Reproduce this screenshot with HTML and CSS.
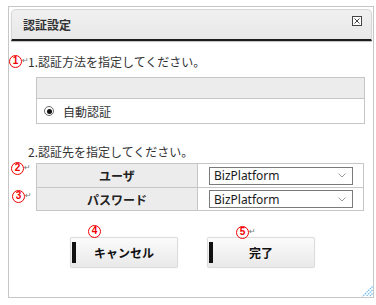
FILE: index.html
```html
<!DOCTYPE html>
<html lang="ja">
<head>
<meta charset="utf-8">
<title>認証設定</title>
<link rel="stylesheet" href="styles.css">
</head>
<body>
<div class="dialog">
  <div class="hdr">
    <span class="title">認証設定</span>
    <svg class="close" width="10" height="10" viewBox="0 0 10 10" aria-label="閉じる">
      <rect x="0.5" y="0.5" width="9" height="9" fill="#fff" stroke="#444"/>
      <path d="M2.5 2.5 L7.5 7.5 M7.5 2.5 L2.5 7.5" stroke="#444" stroke-width="1"/>
    </svg>
  </div>
  <div class="body">
    <p class="step step1">1.認証方法を指定してください。</p>
    <div class="box">
      <div class="box-head"></div>
      <div class="radio-row"><span class="radio"></span><span>自動認証</span></div>
    </div>
    <p class="step step2">2.認証先を指定してください。</p>
    <div class="grid">
      <div class="th">ユーザ</div>
      <div class="td"><div class="select"><span>BizPlatform</span><svg width="8" height="5" viewBox="0 0 8 5"><path d="M0.5 0.5 L4 4 L7.5 0.5" fill="none" stroke="#999" stroke-width="1"/></svg></div></div>
      <div class="th">パスワード</div>
      <div class="td"><div class="select"><span>BizPlatform</span><svg width="8" height="5" viewBox="0 0 8 5"><path d="M0.5 0.5 L4 4 L7.5 0.5" fill="none" stroke="#999" stroke-width="1"/></svg></div></div>
    </div>
    <div class="actions">
      <button class="btn" type="button">キャンセル</button>
      <button class="btn" type="button">完了</button>
    </div>
  </div>
  <span class="mk mk1"><b>1</b><i>↵</i></span>
  <span class="mk mk2"><b>2</b><i>↵</i></span>
  <span class="mk mk3"><b>3</b><i>↵</i></span>
  <span class="mk mk4"><b>4</b></span>
  <span class="mk mk5"><b>5</b><i>↵</i></span>
  <svg class="grip" width="11" height="11" viewBox="0 0 11 11">
    <path d="M10.5 0.5 L0.5 10.5 M10.5 4 L4 10.5 M10.5 7.5 L7.5 10.5" stroke="#6db8ec" stroke-width="1.2" stroke-dasharray="1.5 0.8"/>
  </svg>
</div>
</body>
</html>
```

FILE: styles.css
```css
html, body {
  margin: 0;
  padding: 0;
  background: #fff;
}
body {
  font-family: "Noto Sans CJK JP", "Noto Sans", sans-serif;
  font-size: 12px;
  color: #333;
}
.dialog {
  position: relative;
  box-sizing: border-box;
  margin: 6px 0 0 8px;
  width: 366px;
  height: 292px;
  border: 1px solid #c6c6c6;
  padding: 2px 1px 0 2px;
}
.hdr {
  box-sizing: border-box;
  height: 32px;
  display: flex;
  justify-content: space-between;
  align-items: center;
  background: linear-gradient(#f0f0f0, #e8e8e8);
  border: 1px solid #d6d6d6;
  border-bottom: 2px solid #1c1c1c;
  border-radius: 5px 5px 0 0;
  box-shadow: 0 1px 1px rgba(0,0,0,0.25);
  padding: 0 9px 0 11px;
}
.title {
  font-weight: bold;
  font-size: 12px;
  color: #333;
  line-height: 16px;
}
.close {
  align-self: flex-start;
  margin-top: 6px;
  display: block;
}
.body {
  padding: 0 7px 0 17px;
}
.step {
  margin: 0;
  line-height: 17px;
  color: #333;
}
.step1 { margin-top: 12px; }
.step2 { margin-top: 19px; }
.box {
  margin: 7px 0 0 8px;
  border: 1px solid #c6c6c6;
}
.box-head {
  height: 20px;
  background: #ececec;
  border-bottom: 1px solid #c6c6c6;
}
.radio-row {
  height: 24px;
  display: flex;
  align-items: center;
  padding-left: 7px;
  gap: 9px;
  color: #333;
}
.radio {
  box-sizing: border-box;
  width: 10px;
  height: 10px;
  border: 1px solid #6a6a6a;
  border-radius: 50%;
  background: #fff;
  display: flex;
  align-items: center;
  justify-content: center;
}
.radio::after {
  content: "";
  width: 5px;
  height: 5px;
  border-radius: 50%;
  background: #111;
}
.grid {
  margin: 3px 0 0 8px;
  display: grid;
  grid-template-columns: 160px 165px;
  grid-template-rows: 23px 22px;
  gap: 1px;
  background: #c6c6c6;
  border: 1px solid #c6c6c6;
  width: max-content;
}
.th {
  background: #ececec;
  font-weight: bold;
  color: #222;
  display: flex;
  align-items: center;
  justify-content: center;
}
.td {
  background: #fff;
  display: flex;
  align-items: center;
  padding: 0 10px 0 11px;
}
.select {
  box-sizing: border-box;
  width: 144px;
  height: 18px;
  border: 1px solid #7a7a7a;
  background: #fff;
  display: flex;
  align-items: center;
  justify-content: space-between;
  padding: 0 6px 0 4px;
  font-family: "Noto Sans", sans-serif;
  font-size: 12px;
  color: #1a1a1a;
}
.actions {
  margin-top: 26px;
  padding-left: 42px;
  display: flex;
  gap: 29px;
}
.btn {
  position: relative;
  box-sizing: border-box;
  width: 108px;
  height: 31px;
  border: 1px solid #dcdcdc;
  border-radius: 2px;
  background: linear-gradient(#fbfbfb, #e9e9e9);
  box-shadow: 0 0 1px rgba(0,0,0,0.15);
  font-family: "Noto Sans CJK JP", sans-serif;
  font-size: 12px;
  font-weight: bold;
  color: #111;
  padding: 0;
}
.btn::before {
  content: "";
  position: absolute;
  left: 1px;
  top: 4px;
  bottom: 4px;
  width: 4px;
  background: #111;
}
.mk {
  position: absolute;
  display: flex;
  align-items: center;
  white-space: nowrap;
}
.mk b {
  box-sizing: border-box;
  width: 13px;
  height: 13px;
  border: 1.5px solid #f00000;
  border-radius: 50%;
  font-family: "Liberation Sans", sans-serif;
  font-size: 10px;
  line-height: 10px;
  font-weight: bold;
  text-align: center;
  color: #f00000;
}
.mk i {
  font-style: normal;
  font-family: "DejaVu Sans", sans-serif;
  font-size: 8px;
  line-height: 8px;
  color: #777;
  margin-top: -1px;
}
.mk1 { left: 0px; top: 48px; }
.mk2 { left: 2px; top: 155px; }
.mk3 { left: 3px; top: 183px; }
.mk4 { left: 79px; top: 218px; }
.mk5 { left: 227px; top: 219px; }
.grip {
  position: absolute;
  right: 0;
  bottom: 0;
}
```
